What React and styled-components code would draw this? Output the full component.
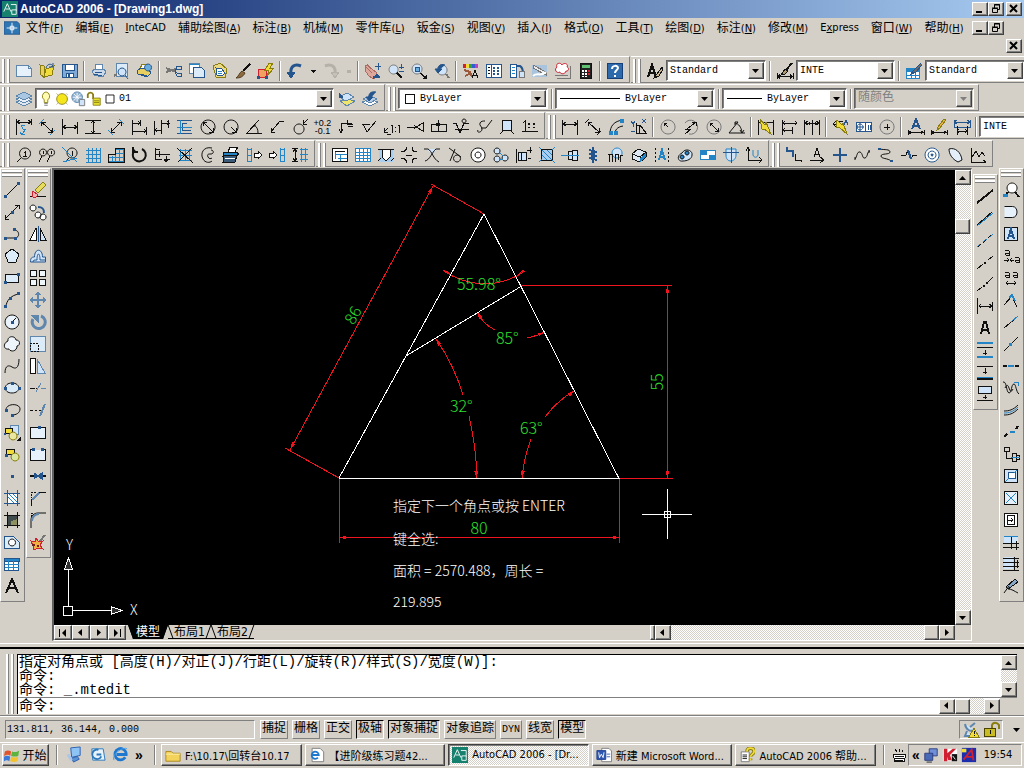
import React, { useState } from "react";
import styled, { createGlobalStyle, css } from "styled-components";

const k = "#111";
const b = "#2384c6";
const n = "#24558c";
const g = "#777";
const w = "#fff";
const l = "#cfe4f8";
const y = "#f2dc3a";
const r = "#d02030";
const s = "#5f86ad";
const o = "#8a7d10";
const none = "none";

// every icon is a list of [d, stroke, fill, strokeWidth] on an 18 x 18 grid
const ICONS = {
  // standard
  new: [["M1.5 3.5h12l3 3v8h-15z", s, "#e6f1fb"], ["M13.5 3.5v3h3", s]],
  open: [["M2 3l4 1v11l-3-2z", o, "#e9cf62"], ["M6 15L8 7l8-3-2 9z", o, y], ["M8 6c1-4 5-5 7-2M15 1v4h-4", n]],
  save: [["M1.5 2.5h15v13h-15z", n, "#7fa9d6"], ["M4.5 2.5h9v6h-9z", n, w], ["M5.5 11.5h7v4h-7z", n, w], ["M7 12h2v3H7z", none, n]],
  print: [["M5 7l1-5h6l1 5", s, w], ["M2 9l3-2h9l2 3-3 5-9-2z", s, "#c9d9ea"], ["M4 12l8 2M5 10l7 1", n]],
  preview: [["M3.5 1.5h11v13h-11z", s, "#dcebf8"], ["M9 6a4 4 0 1 0 .1 0zM12 13l3 4", n, l], ["M1 14l3-2", g, none, 2]],
  publish: [["M4 7l2-5h5l1 4", o, w], ["M1 9l4-3 8 2 2 3-4 4-9-3z", n, "#e9cf62"], ["M12 2a3.500 3.500 0 1 0 .1 0z", n, "#6aaede"], ["M4 12l7 2", n]],
  cut: [["M1 6l10 4M1 10l10-3", g, none, 2], ["M12 4h4v3h-4l-2 2 2 2h4v3h-4l-2-4z", n, none, 1]],
  copyClip: [["M1.500 1.500h10v10h-10z", s, w], ["M5.500 5.500h8l3 3v7h-11z", n, "#dcebf8"], ["M1 2h10", b]],
  paste: [["M2 4l7-3 7 6-2 9-9-1z", o, "#ead884"], ["M5 6l6 1 3 4-3 3-5-1z", n, w], ["M7 9l4 1M7 11l4 1", b]],
  match: [["M16 2L9 9", k, none, 2], ["M8 9l3 2c-2 4-5 5-9 5 3-2 3-5 6-7z", "#553c20", "#8d6a40"]],
  blockEdit: [["M1.500 7.500h8v8h-8z", r, "#f0a060"], ["M12 1l-4 7h4l-2 6 7-8h-4l3-5z", o, y], ["M0 15h3M8 15h3", n, none, 3]],
  undo: [["M15 4C8 1 4 5 5 12", n, none, 3], ["M1 10l4 6 4-6z", n, n]],
  redo: [["M3 4c7-3 11 1 10 8", "#b5b1a9", none, 3], ["M9 10l4 6 4-6z", "#b5b1a9", "#c5c1b9"]],
  caret: [["M6 8h6l-3 3z", none, k]],
  caretOff: [["M7 8h4v3h-4z", none, "#b5b1a9"]],
  pan: [["M1 3l3 1 5 4 3 2 1 5-4 2-5-4-3-5z", "#a96b62", "#dda79c"], ["M3 2l6 6M2 5l6 6", "#a96b62"], ["M9 16l4-3 3 3", n, n, 2], ["M14 1v7M11 4h6", n]],
  zoomReal: [["M6.500 3a4.500 4.500 0 1 0 .1 0z", g, l], ["M10 11l5 5", k, none, 2], ["M12 5h5M14.500 2v5M12 9h5", n]],
  zoomWin: [["M7 2a5 5 0 1 0 .1 0z", g, l], ["M5 5h4v4h-4z", n, "#6aaede"], ["M10.500 11l4 4", k, none, 2], ["M17 12v5h-5z", none, k]],
  zoomPrev: [["M9 3a5 5 0 1 0 .1 0z", g, l], ["M13 12l3 4", g, none, 2], ["M12 3C6 1 5 5 5 9M2 7l3 4 4-4z", n, n]],
  props: [["M1 2h3v4H1z", none, r], ["M4 2h3v4H4z", none, y], ["M7 2h3v4H7z", none, "#30a040"], ["M10 2h3v4h-3z", none, "#3060d0"], ["M13 2h3v4h-3z", none, "#c040c0"], ["M2 8l6 2 2 5M3 14l6-3", "#9b5a3a", none, 2], ["M10 16l3-8 3 8M11 13h4", k]],
  designCenter: [["M1.500 2.500h15v13h-15z", n, w, 1], ["M6 3v12", n], ["M8 5h2v2H8zM12 5h2v2h-2zM8 8h2v2H8zM12 8h2v2h-2zM8 11h2v2H8zM12 11h2v2h-2z", none, n], ["M3 5h2M3 8h2M3 11h2", k]],
  palettes: [["M2.500 2.500h6v13h-6z", n, w, 1], ["M8 4h4c2 1 3 4 3 8", n, none, 2], ["M11 9h5v6h-5z", g, l], ["M4 5h3M4 8h3M4 11h3", b]],
  sheetSet: [["M1 3h15v12H1z", none, "#a9c4dc"], ["M2 3l13 7v3L2 6z", g, "#eee"], ["M2 14c4-4 8 1 13-4", w, none, 2]],
  markup: [["M3 5c-2-4 4-5 5-2 2-3 7-1 5 2 3 1 1 5-1 4-1 4-6 3-6 1-4 2-6-3-3-5z", r, w], ["M1 13h13M16 4v12H3", g]],
  calc: [["M3.500 1.500h11v15h-11z", k, "#222"], ["M5 3h8v3H5z", none, "#5fc070"], ["M5 8h2v2H5zM8 8h2v2H8zM5 11h2v2H5zM8 11h2v2H8zM5 14h2v1H5zM8 14h2v1H8z", none, w], ["M11 8h2v2h-2zM11 11h2v2h-2z", none, r]],
  help: [["M1.500 1.500h15v15h-15z", "#173f78", "#2e69ac"], ["M6 7c0-4 6-4 6-1 0 2-3 2-3 5M9 13v2", w, none, 2]],
  textStyle: [["M2 15L6 3l4 12M4 11h5", k, none, 2], ["M16 5l-5 7-3 4 5-2 4-7z", k, "#c9b68e"]],
  dimStyle: [["M16 1l-6 7", k, none, 2], ["M9 7l3 2-3 3-4 1z", k, "#b29b70"], ["M1 11v6M17 11v6M2 14.500h14M4 12.500l-2 2 2 2M14 12.500l2 2-2 2", k]],
  tableStyle: [["M1.500 6.500h13v10h-13z", b, w], ["M1 7h13v3H1z", none, b], ["M6 7v9M10 7v9M2 13h12", b], ["M16 1L9 8l-3 4 5-2 6-7", n, "#6b6b6b"]],

  // layers
  layers: [["M1 12l8-3 8 3-8 4z", s, "#dfe8f0"], ["M1 9l8-3 8 3-8 4z", s, "#e8eff6"], ["M1 6l8-4 8 4-8 4z", s, "#a9c6e3"]],
  bulb: [["M9 1a5 5 0 0 0-2 9v3h4v-3a5 5 0 0 0-2-9z", o, "#fffbb0"], ["M7 14h4M7 16h4", g]],
  sun: [["M9 3a6 6 0 1 0 .1 0z", o, "#f5e61c"], ["M3 3l1 1M14 3l1 1M3 15l1-1M14 14l1 1", o]],
  vpFreeze: [["M8 1a6 6 0 1 0 .1 0z", s, "#8fb0d0"], ["M3 7h10M8 2v10M4 3l8 8M12 3l-8 8", w], ["M10.500 9.500h6v7h-6z", g, l]],
  lock: [["M2 8V4c1-3 5-3 6 0v5", o, none, 2], ["M8 8h8v8H8z", o, "#e9e430"], ["M9 11h6M9 13h6", o]],
  swatch: [["M4.500 4.500h9v9h-9z", k, w]],
  layerState: [["M2 11l7-2 8 2-8 5z", s, "#eee46e"], ["M1 7l8-4 7 4-8 4z", s, l], ["M1 3v5l4-1z", n, n]],
  layerPrev: [["M1 12l8-3 8 3-8 4z", s, w], ["M2 9l7-3 7 3-7 4z", s, "#b3cce6"], ["M15 2c-6-1-8 2-7 8M5 7l3 4 4-4z", n, n]],

  // dimensions
  powerDim: [["M1.500 1v16M16.500 1v6M2 4h14M5 2L2 4l3 2M13 2l3 2-3 2", k], ["M10 7H6l2 4h3l-4 5M5 14l2 3 3-1", b]],
  aligned: [["M1 6l5-5M12 17l5-5", b], ["M3.500 4l11 10M3.500 8V4h4M10 14h4.500v-4", k]],
  horiz: [["M1.500 1v16M16.500 4v12M2 9h14M5 7L2 9l3 2M13 7l3 2-3 2", k]],
  vert: [["M1 2.500h16M1 15.500h16M9 3v12M7 5l2-2 2 2M7 13l2 2 2-2", k]],
  diag: [["M1 12l5 5M12 1l5 5", b], ["M4 14L14 4M4 10v4h4M10 4h4v4", k]],
  baseDim: [["M2.500 2v15M10.500 2v6M16.500 9v8M3 5h7M3 13h13M8 3l2 2-2 2M14 11l2 2-2 2", k]],
  chainDim: [["M1.500 3v14M8.500 2v14M15.500 2v8M2 12h6M9 5h8M4 10l-2 2 2 2M14 3l2 2-2 2", k]],
  multiDim: [["M1 2.500h15M1 15.500h15M11 5.500H6v7h9", n], ["M4.500 2v14M1 9h15", b]],
  diameter: [["M9 2a7 7 0 1 0 .1 0z", k], ["M4 4l10 10M4 8V4h4M10 14h4v-4", k]],
  radius: [["M9 2a7 7 0 1 0 .1 0z", k], ["M9 9l5 5M10 14h4v-4", k]],
  angular: [["M14 2L2 15h15", k], ["M9 7c3 2 4 4 4 8M11 7H9v2", k]],
  leader: [["M16 3h-4L3 14M3 10v4h4", k]],
  ball: [["M8 6a5 5 0 1 0 .1 0z", k], ["M17 1l-5 5M12 2v4h4", k]],
  leader2: [["M4 14V5h11M2 11l2 4 2-4M10 2v4h6M11 8h5", k]],
  roughness: [["M2 6h8M3 6l4 8 9-11", k]],
  scale11: [["M1 14l4-4M1 10v4h4M4 16h4M9 7v8M16 7v8M8 8l1-1M15 8l1-1M12 9v1M12 13v1", k]],
  taper: [["M1 9h9M10 9l7-4v8zM8 7l2 2-2 2", k]],
  weld: [["M2 6.500h15v7H2zM9 2v11", k], ["M7 5h4v3H7z", none, k]],
  datum: [["M1 5h3l4 10 4-10h5M3 11h14", k], ["M12 1a2 2 0 1 0 .1 0", k]],
  section: [["M3 12c-2 3 4 3 4-1 0-3-3-3-2-6 1-2 3-2 5-2M6 10h5L17 2", k]],
  symbol: [["M4.500 2.500h9v10h-9z", k, l], ["M5 13l-3 3M13 13l3 3", k]],
  oneLine: [["M2 5l2-2v10M1 13h16", k], ["M7 5h2v2H7zM12 5h2v2h-2zM7 9h2v1H7zM12 9h2v1h-2z", none, k]],
  dLinear: [["M1.500 2v15M16.500 2v15M2 6h14M5 4L2 6l3 2M13 4l3 2-3 2", k]],
  dAligned: [["M1 5l4-4M13 17l4-4M4 4l11 10M4 8V4h4M11 14h4v-4", k]],
  arcLen: [["M3 16c0-8 4-13 13-14M8 16c0-4 2-7 8-8", k], ["M2 13h3v3H2zM13 1h3v3h-3zM7 13h3v3H7z", b, b]],
  ordinate: [["M6 5v10h11M6 7h4l6 8M9 8v7", k], ["M1 3l2 3 2-3M3 6v3M1 13h4M12 1l4 4M16 1l-4 4", n]],
  dRadius: [["M9 2a7 7 0 1 0 .1 0z", g], ["M9 9L5 5M5 8V5h3", k]],
  jogged: [["M3 5a7 7 0 1 1 4 11", g], ["M3 16l6-5H5l8-6M10 4h4v4", k]],
  dDiameter: [["M9 2a7 7 0 1 0 .1 0z", g], ["M5 5l8 8M5 8V5h3M10 13h3v-3", k]],
  dAngular: [["M1 15h16M1 15L10 4M7 5c4 1 6 4 7 9M10 4H7v3M12 12l2 3 2-3", k]],
  quick: [["M1.500 2v15M16.500 2v15M2 4h14", k], ["M3 1l5 6 1-3 5 12-7-5H5z", o, y]],
  baseline: [["M2.500 2v15M3 5h14M3 12h9M5 3L3 5l2 2M15 3l2 2-2 2M12 9v7M5 10l-2 2 2 2", k]],
  contin: [["M1.500 2v15M9 2v15M16.500 2v15M2 5h14M5 3L2 5l3 2M13 3l3 2-3 2M6 4v3M12 4v3", k]],
  qleader: [["M1 6h5M4 3L1 6l3 3M7 3h4", k], ["M5 2l5 5 1-2 4 11-7-6-4-1z", o, y], ["M12 7l2-5 2 5", n]],
  tolerance: [["M1.500 4.500h15v9h-15z", n, w], ["M10 5v9M13 7v5M15 7v5", n], ["M5 6a3 3 0 1 0 .1 0M5 5v8M2 9h7", n]],
  centerMark: [["M9 2a7 7 0 1 0 .1 0z", g], ["M9 6v6M6 9h6", k]],
  dimEdit: [["M5 11L9 1l4 10M6 8h6", n, none, 2], ["M1 12v5M17 12v5M2 14.500h14M4 13l-2 1.500 2 1.500M14 13l2 1.500-2 1.500", k]],
  dimTextEdit: [["M14 1L8 9l-1 3 3-2 6-8z", o, "#e8b040"], ["M1 12v5M17 12v5M2 14.500h14M4 13l-2 1.500 2 1.500M14 13l2 1.500-2 1.500", k]],
  dimUpdate: [["M1 4h16M4 2L1 4l3 2M14 2l3 2-3 2M1 2v8M17 2v8M1 9h16", n], ["M4 8v9M14 8v9M4 13h10M6 11l-2 2 2 2M12 11l2 2-2 2", k]],

  // mechanical
  balloon: [["M10 2a5.500 5.500 0 1 0 .1 0", k], ["M6 12l-4 4M10 5v6M9 6h1M8 10h4", k]],
  balloons: [["M5 3a3.500 3.500 0 1 0 .1 0M13 3a3.500 3.500 0 1 0 .1 0", k], ["M4 10l-3 6M12 10l-3 6M5 5v3M13 5v3", k]],
  balloonOff: [["M11 2a5 5 0 1 0 .1 0", k], ["M8 12l-4 4M11 5v5", k], ["M1 1l15 15M16 12L2 16", b]],
  grid: [["M4 2v14M8 2v14M12 2v14M16 2v14M2 4h15M2 8h15M2 12h15M2 16h15", b]],
  bom: [["M8 2v14M12 2v14M16 2v14M8 3h9M8 7h9M2 11h15M2 15h15M5 10v6", b], ["M1 16V8h7V2h9v14z", k]],
  spin: [["M12 3a6.500 6.500 0 1 1-7 1M3 1v5h5", k, none, 2]],
  insertRow: [["M2 2v12M2 3h5M2 8h15M6 5v6M2 13h7M11 13h6M13 10v5M11 13l2 3 2-3", k]],
  deleteGrid: [["M4 3v12M9 3v12M13 3v12M3 4h13M3 9h13M3 14h13", b], ["M1 2l16 15M16 2L2 16", k]],
  chain: [["M13 2c-9-2-12 6-9 11 2 4 7 4 9 2M12 4c3 0 3 4 0 4s-4 0-3 3c1 2 3 2 4 1", k]],
  printer: [["M6 6l2-5h8l-3 5", k, w], ["M2 6h12l3 2-3 2H1z", k, b], ["M2 9h13l-2 7H1z", k, "#395a78"], ["M3 12h10", w]],
  tableRight: [["M2 2v14M6 2v14M2 3h4M2 9h4M2 15h4", b], ["M9 7h4V5l4 4-4 4v-2H9z", k, w]],
  tableLeft: [["M12 2v14M16 2v14M12 3h5M12 9h5M12 15h5", b], ["M1 7h4V5l4 4-4 4v-2H1z", k, w]],
  tableHeight: [["M1 2.500h6M1 15.500h6M4 3v12M2 6l2-3 2 3M2 12l2 3 2-3", k], ["M10 2v14M14 2v14M9 3h8M9 8h8M9 13h8", b]],
  titleBlock: [["M1.500 2.500h15v13h-15z", k, w], ["M4 5v8M4 8h12M7 12h9M9 9v6", b], ["M4 5h10", k]],
  sheetGrid: [["M1.500 2.500h15v13h-15z", b, w], ["M5 3v12M9 3v12M13 3v12M2 6h14M2 9h14M2 12h14", b]],
  hole: [["M2 3h14v13H2z", none, "#a9cdef"], ["M5 3v8l4 4 4-4V3z", k, w], ["M1 3h16M1 15l3-3M14 15l3-3", k]],
  slot: [["M1 5.500h3l2-2V1M1 12.500h3l2 2V17M17 5.500h-3l-2-2V1M17 12.500h-3l-2 2V17M6 9h6", k]],
  cross: [["M4 3h10l-5 6z", none, l], ["M1 3h4c4 2 5 10 11 13M17 3h-4C9 6 7 14 2 15", k]],
  tangent: [["M11 9a3.500 3.500 0 1 0 .1 0M3 2l12 9M9 3L4 15", k]],
  rings: [["M9 2a7 7 0 1 0 .1 0z", k, w], ["M9 6a3 3 0 1 0 .1 0z", k, w]],
  balls: [["M5 2a3 3 0 1 0 .1 0M5 10a3 3 0 1 0 .1 0M13 9a3 3 0 1 0 .1 0", k, l], ["M7 7l5 3M8 13h3", b]],
  bolt: [["M3 6h8v8H3zM1 3v14M6 6v8", k, l], ["M15 1v6M12 4h5M13 12h3", k]],
  hatchSq: [["M3.500 3.500h11v11h-11z", k, "#a9cdef"], ["M4 4l10 10M4 9l5 5M9 4l5 5M1 1l2 2M1 16l3-3M14 4l3-3M14 14l3 3", b]],
  shaft: [["M1 9h6M7 5h4v8H7zM11 4h5v10h-5z", k, l], ["M0 9h18", b]],
  spring: [["M9 1v3M9 14v3M5 4l8 2-8 2 8 2-8 2 8 2", n, none, 2]],
  gear: [["M10 2a5 5 0 1 0 .1 0", b, l], ["M2 16V8h3v8M8 16V8h3v6M13 16V9h3M1 8h5", k]],
  part3d: [["M2 8l6-5 8 3v5l-6 5-8-3z", k, "#dce9f4"], ["M2 8l8 3 6-5M10 11v5", k], ["M10 12l6-5v4l-6 5z", none, b]],
  letterA: [["M2.500 2v2M2.500 6v2M2.500 10v2M2.500 14v2M15.500 2v2M15.500 6v2M15.500 10v2M15.500 14v2", k], ["M6 14L9 4l3 10M7 11h4", b, none, 2]],
  cam: [["M6 7c4-6 11-2 10 2 0 4-5 6-9 6-5 1-7-5-1-8z", k, l], ["M6 9a2 2 0 1 0 .1 0M11 5a2 2 0 1 0 .1 0", k, b]],
  flag: [["M1.500 4.500h15v9h-15z", b, w], ["M2 5h6v4H2zM10 9h6v4h-6z", none, b]],
  shield: [["M4 3h10v6c0 4-3 6-5 6-3 0-5-2-5-6z", b, l], ["M1 6h16M9 1v16", n]],
  ucsU: [["M3 2v12h14M1 5l2-4 2 4M14 11l3 3-3 3", k], ["M8 4v5c1 3 4 3 5 0V4", b]],
  step: [["M2 1v4h6v6", n, none, 2], ["M10 8v6h6v2", k]],
  aLeader: [["M6 11L9 2l3 9M7 8h4M2 14h13M12 11l4 3-4 3", k]],
  plus: [["M9 2v14M2 9h14", n, none, 2]],
  wave: [["M1 13c2-2 2-8 5-7s2 7 5 6 2-7 5-7M1 11v3M15 4v3", k]],
  sCurve: [["M2 3c6 1 11 0 11 3s-9 1-9 4 7 2 10 5", k], ["M1 2h3v2H1zM13 14h3v2h-3z", none, n]],
  breakLine: [["M1 9h5l2-5 3 9 2-4h4", k], ["M8 4l3 9", n, none, 2]],
  target: [["M9 2a7 7 0 1 0 .1 0M9 5a4 4 0 1 0 .1 0", n, w], ["M9 8a1 1 0 1 0 .1 0", n, n]],
  blade: [["M3 3c6-2 12 3 13 11l-4 2C6 13 3 8 3 3z", k, "#e4eef8"]],
  graph: [["M2 2v14h15M14 14l3 2M3 11l4-6 3 6 3-5 3 4", k]],

  // draw
  line: [["M3 15L15 3", k], ["M1 14h3v3H1zM14 1h3v3h-3z", none, n]],
  xline: [["M2 16L16 2M2 12v4h4M12 2h4v4", k], ["M8 8h3v3H8z", none, n]],
  pline: [["M1 13h11c5 0 5-8-1-8", k], ["M1 12h3v3H1zM11 12h3v3h-3zM10 3h3v3h-3z", none, n]],
  polygon: [["M9 2l7 5-3 8H5L2 7z", k, "#dcebf8"]],
  rect: [["M2.500 5.500h13v8h-13z", k, "#dcebf8"], ["M1 12h3v3H1zM14 4h3v3h-3z", none, n]],
  arc: [["M3 16C3 10 8 4 16 3", k], ["M1 14h3v3H1zM14 1h3v3h-3zM6 6h3v3H6z", none, n]],
  circle: [["M9 2a7 7 0 1 0 .1 0z", k, "#eaf3fb"], ["M9 9l4-4", k], ["M8 8h3v3H8z", none, n]],
  revcloud: [["M5 6c-1-5 7-6 8-1 5 0 4 6 1 6 0 6-7 6-8 3-6 1-6-6-1-8z", k, "#eef5fb"]],
  spline: [["M2 16c0-8 4-8 7-6s7 2 7-8", k]],
  ellipse: [["M9 4c9 0 9 10 0 10S0 4 9 4z", k, "#dcebf8"], ["M1 8h3v3H1zM15 8h3v3h-3zM8 3h3v3H8z", none, n]],
  ellArc: [["M3 9c0-7 14-7 14-1 0 4-4 6-8 6", k], ["M2 8h3v3H2zM8 13h3v3H8z", none, n]],
  insert: [["M7 2h8v9H7z", s, l], ["M2.500 5.500h7v5h-7z", k, y], ["M10 9a4 4 0 1 0 .1 0z", o, "#e8e6a0"], ["M18 13v5h-5z", none, k], ["M1 10h2v2H1z", none, n]],
  block: [["M3.500 4.500h8v5h-8z", k, y], ["M12 8a4 4 0 1 0 .1 0z", o, "#d9e7a0"], ["M2 9h3v3H2z", none, n]],
  point: [["M8 8h3v3H8z", none, n]],
  hatch: [["M4 4h10v10H4z", n, w], ["M5 4l9 9M5 8l6 6M9 4l5 5", b], ["M4 1v16M14 1v16M1 4h16M1 14h16", n]],
  gradient: [["M4 4h10v10H4z", k, "#3f4b4a"], ["M8 10l6-2v6H8z", none, "#8f9060"], ["M4 1v16M14 1v16M1 4h16M1 14h16", k]],
  region: [["M1.500 3.500h9l6 6v6h-15z", n, "#dcebf8"], ["M9 6a3.500 3.500 0 1 0 .1 0z", k, w]],
  table: [["M1.500 3.500h14v12h-14z", n, w], ["M1 3h15v3H1z", n, b], ["M5 6v9M10 6v9M2 9h14M2 12h14", b]],
  mtext: [["M3 16L9 2l6 14M5 11h8", k, none, 2]],

  // modify
  erase: [["M1 15h16", k], ["M6 9l8-8 3 3-8 8z", o, "#e8dc60"], ["M4 10l5 4-2 2H4l-1-3z", r, "#eeb3ac"]],
  copy: [["M4 2a3 3 0 1 0 .1 0M9 9a3 3 0 1 0 .1 0M14 11a3 3 0 1 0 .1 0", k, w], ["M9 4c5 0 6 2 6 6", n, none, 2]],
  mirror: [["M7 3v12H1z", k, w], ["M11 3v12h6z", k, l], ["M9 1v16", n]],
  offset: [["M1.500 15c0-4 1-5 4-5 0-9 8-9 8 0h3v5z", n, l], ["M4 15c0-2 1-2 4-2 0-8 3-8 3 0h6", n]],
  array: [["M1.500 1.500h6v6h-6zM10.500 1.500h6v6h-6zM1.500 10.500h6v6h-6zM10.500 10.500h6v6h-6z", k, "#eef5fb"]],
  move: [["M9 3v12M3 9h12", s, none, 2], ["M6 4l3-4 3 4zM6 14l3 4 3-4zM4 6L0 9l4 3zM14 6l4 3-4 3z", none, s]],
  rotate: [["M12 3a6.500 6.500 0 1 1-8 3", s, none, 3], ["M2 2h7v7z", s, s]],
  scale: [["M1.500 1.500h15v15h-15z", s, "#dcebf8"], ["M1 8.500h2M4 8.500h2M7 8.500h2M9.500 10v2M9.500 13v2M1.500 10v2M1.500 13v2M2 16.500h2M5 16.500h2M8 16.500h2", k]],
  stretch: [["M1.500 1.500h5v15h-5z", k, w], ["M8 2l8 14H8z", s, l]],
  trim: [["M1 9h5M7 9h1M12 9h5", k], ["M7 13l5-9M12 9h5", s]],
  extend: [["M1 9h3M6 9h2M10 9h2", k], ["M11 15l5-12", s, none, 2]],
  breakPt: [["M1.500 4.500h15v11h-15z", k, "#e6f1fb"], ["M9 3h3v3H9z", none, n]],
  breakSeg: [["M1.500 4.500h15v11h-15z", none, "#e6f1fb"], ["M3 4.500H1.500v11h15v-11H15", k], ["M3 3h3v3H3zM12 3h3v3h-3z", none, n]],
  join: [["M1 9h16", k, none, 2], ["M5 6l4 3-4 3zM13 6L9 9l4 3z", n, n]],
  chamfer: [["M2 17v-6l8-8h7", k], ["M2 3h2M5 3h2M2 5v2M2 8v1", k], ["M3 11l7-7", s, none, 2]],
  fillet: [["M2 17V9c0-4 3-7 7-7h8", k], ["M2 2h2M2 4v2", k], ["M3 10c0-4 3-7 7-7", s, none, 2]],
  explode: [["M2 8l4 1 1-4 3 4 4-1-3 4 3 4-5-1-4 2-1-4z", r, "#f0b040"], ["M11 8l5-6", g, none, 2], ["M3 12h3M8 13h2", "#70201a", none, 2]],

  // right hand bars
  thick: [["M1 16L17 3", k, none, 2]],
  thin: [["M1 17L17 4", b], ["M1 16L16 3", k]],
  dashed: [["M1 16l4-3M7 11l4-3M12 7l5-4", b], ["M2 16l3-3M7 12l3-3M12 7l3-3", k]],
  dashDot: [["M1 16l6-5M12 7l5-4", k], ["M8 9h2v2H8z", none, k]],
  dashDots: [["M1 16l5-4M12 7l5-5", k], ["M7 10h2v2H7zM10 7h2v2h-2z", none, k]],
  hDim: [["M1.500 1v16M16.500 5v9M3 9h13M5 7L3 9l2 2M13 7l3 2-3 2", k]],
  bigA: [["M5 15L8 3h2l3 12M6 11h6", k, none, 2]],
  rowsTop: [["M1 2h16M1 16h16", b, none, 2], ["M1 6.500h16M9 9v5M7 12h4", k]],
  rowsMid: [["M1 3h16M9 5v6M7 9h4", k], ["M1 15h16", k, none, 3], ["M1 14h16", b]],
  rowsBox: [["M2.500 1.500h13v7h-13z", k, l], ["M1 15h16M9 10v4M7 12h4", k]],
  find: [["M10 2a5 5 0 1 0 .1 0", k, w], ["M13 11l4 5M6 11l-3 4", k, none, 2], ["M1 13h5v3H1z", none, b]],
  dShape: [["M2.500 3.500h8c6 0 6 11 0 11h-8", k, "#e6f1fb"]],
  boxA: [["M2.500 2.500h13v13h-13z", k, l], ["M6 14L9 4l3 10M7 11h4", n, none, 2]],
  aaIn: [["M3 3h3l1 1v4H4L3 7l1-1h3M2 13h5M5 11l2 2-2 2M12 13H8M10 11l-2 2 2 2M13 10h3l1 1v4h-3l-1-1 1-1h3", k]],
  aaOut: [["M3 3h3l1 1v4H4L3 7l1-1h3M11 3h3l1 1v4h-3l-1-1 1-1h3M4 14h10M6 12l-2 2 2 2M12 12l2 2-2 2", k]],
  corner: [["M2 14l8-9 5 11", k], ["M7 7l3-3 3 6", b, none, 2]],
  segment: [["M2 15L13 6", k], ["M9 9l7-6", b]],
  segmentMid: [["M2 16L16 2", k], ["M7 8h3v3H7z", none, b]],
  dashSeg: [["M1 9h4M13 9h4", k, none, 2], ["M6 9h6", b, none, 2]],
  zigzag: [["M1 3c4-1 3 10 6 11 3 0 2-9 5-9 2 0 2 8 5 10M3 9c2-4 3-3 4 0s2 5 4 1", k], ["M12 3h4v4", b]],
  ripple: [["M2 10c5 0 9-1 14-6M2 14c5 0 9-1 14-6", k], ["M2 12c5 0 9-1 14-6", b]],
  stairs: [["M2 14l3-3M14 6l2-3", k, none, 2], ["M8 9h5", b, none, 2]],
  assembly: [["M2 2h5v4H2zM4 7v6h6M10 8h4v8h-4zM14 10h3v4h-3z", k], ["M9 12h9", b]],
  frameX: [["M2.500 2.500h13v13h-13z", k, l], ["M6 5h7v6H6z", n, w], ["M3 15l4-4M15 3l-3 3", b]],
  boxX: [["M2.500 2.500h13v13h-13z", k, "#e6f1fb"], ["M4 4l10 10M14 4L4 14", b]],
  boxArrow: [["M2.500 2.500h13v13h-13z", k, w], ["M5.500 4.500h7v9h-7zM6 9h4M9 7l2 2-2 2", k]],
  tblA: [["M2 3h7v7H2zM10 3h6v7h-6z", none, l], ["M1 10h16M1 14h16M9 3v13M14 8v9", k], ["M2 3h14", b]],
  tblB: [["M2 2h9v12H2z", none, l], ["M1 3h16M1 7h16M1 11h16M1 15h16M12 2v14M15 5v8", k]],
  pen: [["M4 10l9-8 3 3-10 7z", k, "#89a7c7"], ["M7 9L2 16M6 12c4 0 6 2 10 4", k]],

  // shell
  app: [["M0 0h18v18H0z", none, "#16806f"], ["M2 12L6 3l4 9M4 9h4M10 4h6v7", w], ["M11 10h5v5h-5z", w, "#16806f"]],
  drawing: [["M0 2h15l3 3v11H0z", n, "#2d76b3"], ["M9 3v12M3 9h12M7 7h4v4H7z", w]],
  win: [["M1 5c3-2 5-1 7 0l-1 5c-2-2-4-1-7 0z", none, "#e0532c"], ["M9 5c3 1 5 1 8-1l-1 6c-3 1-5 1-8 0z", none, "#5cb33e"], ["M0 11c3-2 5-1 7 0l-1 5c-3-2-4-1-6 0z", none, "#3b78d8"], ["M8 11c3 1 5 1 8 0l-1 5c-3 1-5 1-8 0z", none, "#f2c32c"]],
  desktop: [["M5 2l10-1v9L6 12z", "#2c5fae", "#8ec3f5"], ["M6 13l6-2 2 3-6 3z", "#2c5fae", "#5b93d8"], ["M2 9l4 6", "#a9c6ea", none, 3]],
  outlook: [["M3 3h12l2 12H4z", "#2c77b8", "#e6f3fd"], ["M10 4a5 5 0 1 0 3 7M8 9h5", "#2c77b8", none, 2]],
  ie: [["M14 12a6 6 0 1 1 1-3H5", "#1f78d0", none, 3], ["M2 15C-1 9 12 0 16 3", "#4aa0e8"]],
  iePage: [["M3.500 1.500h9l4 4v11h-13z", g, w], ["M10 12a4 4 0 1 1 1-3H4", "#1f78d0", none, 2]],
  folder: [["M1 5h6l2 2h8v9H1z", "#a88418", "#f3d35b"], ["M1 8h16", "#fff2b0"]],
  word: [["M6.500 1.500h8l3 3v12h-11z", g, w], ["M1 4h10v10H1z", "#1f3f93", "#2f57b0"], ["M3 6l1 6 2-4 2 4 1-6", w], ["M12 8h4M12 11h4", "#2f57b0"]],
  chm: [["M2.500 5.500h9v11h-9z", g, w], ["M4 9h5M4 11h5M4 13h5", k], ["M9 5c0-5 8-5 8 0 0 3-4 3-4 6M13 13v2", o, none, 4], ["M9 5c0-5 8-5 8 0 0 3-4 3-4 6M13 13v2", y, none, 2]],
  keyboard: [["M3.500 8.500h12l-1 7h-10z", k, w], ["M5 10h9M5 12h9M5 14h8", k], ["M5 3l2 3M9 3l1 3M12 4l1 2", k]],
  network: [["M7 2h9v8H7z", "#2b3c78", "#6f8fd8"], ["M2 7h9v8H2z", "#2b3c78", "#4868b8"], ["M4 17h6", g, none, 2]],
  kasper: [["M1 2h16v14H1z", none, w], ["M2 2h4v5l6-5h4L9 9l2 6H7L6 11v5H2z", none, r], ["M11 8h6v8h-6z", none, k], ["M12 10l3 4", w]],
  acadTray: [["M1 1h16v16H1z", none, "#1b2fae"], ["M3 14L12 3l2 12M6 11h8", r, none, 2], ["M1 2h5v4H1z", none, y]],
  comm: [["M3 3c1 6 5 8 10 6M8 6l5-4M5 10l-2 5h7", s, l, 2], ["M12 7l5 9H7z", o, y], ["M12 10v3M12 14v1", k]],
  unlock: [["M9 8V4c1-3 5-3 7 0v4", o, none, 2], ["M1 7h11v8H1z", "#4a4300", "#c9bb22"], ["M7 9v4", k]],
};

const Glyph = styled.svg.attrs({ viewBox: "0 0 18 18", "aria-hidden": true })`
  width: ${(p) => p.$size || 18}px;
  height: ${(p) => p.$size || 18}px;
  flex: none;
  display: block;
`;

// straight strokes snap to the pixel grid, curves stay smooth
const rendering = (d) => (/[acCs]/.test(d) ? "auto" : "crispEdges");

function Icon({ name, size }) {
  return (
    <Glyph $size={size}>
      {ICONS[name].map(([d, stroke = k, fill = none, width = 1], i) => (
        <path
          key={i}
          d={d}
          stroke={stroke}
          fill={fill}
          strokeWidth={width}
          shapeRendering={size ? "auto" : rendering(d)}
        />
      ))}
    </Glyph>
  );
}

const MENUS = [
  ["文件", "F"], ["编辑", "E"], ["InteCAD"], ["辅助绘图", "A"], ["标注", "B"], ["机械", "M"],
  ["零件库", "L"], ["钣金", "S"], ["视图", "V"], ["插入", "I"], ["格式", "O"], ["工具", "T"],
  ["绘图", "D"], ["标注", "N"], ["修改", "M"], ["Express"], ["窗口", "W"], ["帮助", "H"],
];

const STANDARD = "new open save | print preview publish | cut copyClip paste match blockEdit | undo caret redo caretOff | pan zoomReal zoomWin zoomPrev | props designCenter palettes sheetSet markup calc | help";
const POWER_DIM_A = "powerDim aligned horiz vert diag baseDim chainDim multiDim diameter radius angular leader ball";
const POWER_DIM_B = "leader2 roughness scale11 taper weld datum section symbol oneLine";
const DIMENSION = "dLinear dAligned arcLen ordinate | dRadius jogged dDiameter dAngular | quick baseline contin | qleader tolerance centerMark | dimEdit dimTextEdit dimUpdate |";
const BALLOONS = "balloon balloons balloonOff grid bom spin insertRow deleteGrid chain printer tableRight tableLeft tableHeight";
const MECHANICAL = "titleBlock sheetGrid hole slot cross tangent rings balls bolt hatchSq shaft spring gear part3d letterA cam flag shield ucsU";
const SKETCH = "step aLeader plus wave sCurve breakLine target blade graph";
const DRAW = "line xline pline polygon rect arc circle revcloud spline ellipse ellArc insert block point hatch gradient region table mtext";
const MODIFY = "erase copy mirror offset array move rotate scale stretch trim extend breakPt breakSeg join chamfer fillet explode";
const LINES = "thick thin dashed dashDot dashDots hDim bigA rowsTop rowsMid rowsBox";
const EDITING = "find dShape boxA aaIn aaOut corner segment segmentMid dashSeg zigzag ripple stairs assembly frameX boxX boxArrow tblA tblB pen";

const TASKS = [
  ["folder", "F:\\10.17\\回转台10.17"],
  ["iePage", "【进阶级练习题42..."],
  ["app", "AutoCAD 2006 - [Dr..."],
  ["word", "新建 Microsoft Word..."],
  ["chm", "AutoCAD 2006 帮助..."],
];

function Tools({ items }) {
  return items.split(" ").map((name, i) => {
    if (name === "|") return <Separator key={i} />;
    return (
      <ToolButton key={i} type="button" aria-label={name} $narrow={name.startsWith("caret")}>
        <Icon name={name} />
      </ToolButton>
    );
  });
}

function Combo({ label, value, icon, lineWidth, width, disabled, cjk }) {
  return (
    <ComboBox $width={width} $disabled={disabled}>
      {icon}
      {lineWidth && <LineSample $width={lineWidth} />}
      <ComboSelect aria-label={label} disabled={disabled} $cjk={cjk}>
        <option>{value}</option>
      </ComboSelect>
      <ComboArrow $disabled={disabled}>
        <Arrow dir="down" />
      </ComboArrow>
    </ComboBox>
  );
}

const ARROWS = {
  up: "M0 6h7L3.500 2z",
  down: "M0 2h7L3.500 6z",
  left: "M5 0v7L1 3.500z",
  right: "M2 0v7l4-3.500z",
  first: "M0 0h1v8H0zM7 0v8L3 4z",
  last: "M7 0h1v8H7zM1 0v8l4-4z",
};

function Arrow({ dir }) {
  return (
    <svg width="8" height="8" viewBox="0 0 8 8" aria-hidden="true">
      <path d={ARROWS[dir]} fill="currentColor" />
    </svg>
  );
}

function WindowIcon({ type }) {
  return (
    <svg width="10" height="10" viewBox="0 0 10 10" fill="none" stroke="#000" aria-hidden="true">
      {type === "min" && <path d="M1 8h6" strokeWidth="2" />}
      {type === "restore" && <path d="M3.500 4V.5h5v5H7M3 1h6M1.500 4.500h5v4h-5zM1 4h6" />}
      {type === "close" && <path d="M1 1l7 7M8 1L1 8" strokeWidth="2" />}
    </svg>
  );
}

function Drawing() {
  return (
    <DrawingSvg role="img" aria-label="Drawing1.dwg">
      <g stroke="#f0141e" fill="none">
        <path d="M377 14l53 30M379 16L236 280M231 278l54 30" />
        <path d="M466 115.500h152M565 308.500h54M613.500 116v192" />
        <path d="M285.500 308v65M565.500 308v65M285 367.500h280" />
        <path d="M389 100A70 70 0 0 0 471 101" />
        <path d="M423 142q6 12 18 18M473 168q10-2 18-6" />
        <path d="M382 169q18 26 27 56M415 246q7 30 8 62" />
        <path d="M520 221q-16 9-29 26M477 269q-7 18-9 39" />
      </g>
      <g fill="#f0141e">
        <path d="M379 16l-2 8-3-2zM236 280l5-6-3-2z" />
        <path d="M613.500 116l2 7h-4zM613.500 308l2-7h-4z" />
        <path d="M286 367.500l6-2v4zM565 367.500l-6-2v4z" />
        <path d="M397 105l-4-5-2 3zM463 105l7-4-1-2zM423 142l2 7 4-2zM491 162l-7 1 1 3z" />
        <path d="M382 169l2 7 3-2zM423 308l-3-7h4zM468 308l-1-7h4zM520 221l-7 3 3 3z" />
      </g>
      <path d="M285 308.500h280L430 44 285 308M352 186l114-69" stroke="#fff" fill="none" />
      <CadText fill="#2ee02e" $size={16}>
        <text x="403" y="120">55.98°</text>
        <text x="442" y="174">85°</text>
        <text x="396" y="242">32°</text>
        <text x="466" y="264">63°</text>
        <text x="425" y="364" textAnchor="middle">80</text>
        <text transform="translate(304 148) rotate(-61)" textAnchor="middle">86</text>
        <text transform="translate(609 212) rotate(-90)" textAnchor="middle">55</text>
      </CadText>
      <CadText fill="#fff" $size={14}>
        <text x="339" y="341">指定下一个角点或按 ENTER</text>
        <text x="339" y="374">键全选:</text>
        <text x="339" y="406">面积 = 2570.488，周长 =</text>
        <text x="339" y="437">219.895</text>
        <text x="12" y="380">Y</text>
        <text x="76" y="445">X</text>
      </CadText>
      <g stroke="#fff" fill="none">
        <path d="M9.500 436.500h9v9h-9zM14.500 436v-48M18 440.500h49" />
        <path d="M14.500 388l4 11h-8zM68 440.500l-11-4v8z" fill="#333" />
        <path d="M613.500 319v50M588 344.500h50M610.500 341.500h6v6h-6z" />
      </g>
    </DrawingSvg>
  );
}

export default function App() {
  const [command, setCommand] = useState("");

  return (
    <>
      <GlobalStyle />
      <Page>
        <TitleBar>
          <Icon name="app" size={16} />
          <Title>AutoCAD 2006 - [Drawing1.dwg]</Title>
          <WindowButtons />
        </TitleBar>

        <MenuBar>
          <Icon name="drawing" size={16} />
          <Menus>
            {MENUS.map(([text, key]) => (
              <MenuItem key={text + key} type="button">
                {key ? <Han>{text}</Han> : text.startsWith("I") ? <><u>I</u>nteCAD</> : <>E<u>x</u>press</>}
                {key && <>(<u>{key}</u>)</>}
              </MenuItem>
            ))}
          </Menus>
          <WindowButtons child />
        </MenuBar>
        <MenuOverflow>
          <CaptionButton type="button" aria-label="关闭文档">
            <WindowIcon type="close" />
          </CaptionButton>
        </MenuOverflow>

        <ToolRow>
          <Toolbar>
            <Grip />
            <Tools items={STANDARD} />
          </Toolbar>
          <Toolbar $open>
            <Grip />
            <Tools items="textStyle" />
            <Combo label="文字样式" value="Standard" width={100} />
            <Separator />
            <Tools items="dimStyle" />
            <Combo label="标注样式" value="INTE" width={99} />
            <Separator />
            <Tools items="tableStyle" />
            <Combo label="表格样式" value="Standard" width={100} />
          </Toolbar>
        </ToolRow>
        <ToolRow>
          <Toolbar>
            <Grip />
            <Tools items="layers" />
            <Combo
              label="图层"
              value="01"
              width={299}
              icon={["bulb", "sun", "vpFreeze", "lock", "swatch"].map((name) => (
                <Icon key={name} name={name} size={16} />
              ))}
            />
            <Tools items="layerState layerPrev" />
          </Toolbar>
          <Toolbar>
            <Grip />
            <Combo label="颜色" value="ByLayer" width={150} icon={<Icon name="swatch" />} />
            <Separator />
            <Combo label="线型" value="ByLayer" width={160} lineWidth={60} />
            <Separator />
            <Combo label="线宽" value="ByLayer" width={125} lineWidth={35} />
            <Separator />
            <Combo label="打印样式" value="随颜色" width={120} disabled cjk />
          </Toolbar>
        </ToolRow>
        <ToolRow>
          <Toolbar>
            <Grip />
            <Tools items={POWER_DIM_A} />
            <ToolButton type="button" aria-label="tolerances">
              <Tolerance>
                <span>+0.2</span>
                <span>-0.1</span>
              </Tolerance>
            </ToolButton>
            <Tools items={POWER_DIM_B} />
          </Toolbar>
          <Toolbar $open>
            <Grip />
            <Tools items={DIMENSION} />
            <Combo label="当前标注样式" value="INTE" width={64} />
          </Toolbar>
        </ToolRow>
        <ToolRow>
          <Toolbar>
            <Grip />
            <Tools items={BALLOONS} />
          </Toolbar>
          <Toolbar>
            <Grip />
            <Tools items={MECHANICAL} />
          </Toolbar>
          <Toolbar>
            <Grip />
            <Tools items={SKETCH} />
          </Toolbar>
        </ToolRow>

        <Workspace>
          <SideBar>
            <Grip $flat />
            <Tools items={DRAW} />
          </SideBar>
          <SideBar>
            <Grip $flat />
            <Tools items={MODIFY} />
          </SideBar>
          <Viewport>
            <CanvasRow>
              <Canvas>
                <Drawing />
              </Canvas>
              <VScroll>
                <ScrollButton type="button" aria-label="向上滚动"><Arrow dir="up" /></ScrollButton>
                <Track $grow={34} />
                <Thumb />
                <Track $grow={374} />
                <ScrollButton type="button" aria-label="向下滚动"><Arrow dir="down" /></ScrollButton>
              </VScroll>
            </CanvasRow>
            <TabRow>
              {["first", "left", "right", "last"].map((dir) => (
                <NavButton key={dir} type="button" aria-label={dir}><Arrow dir={dir} /></NavButton>
              ))}
              <Tabs>
                <Tab type="button" $active>模型</Tab>
                <Tab type="button">布局1</Tab>
                <Tab type="button">布局2</Tab>
              </Tabs>
              <HScroll>
                <Splitter />
                <ScrollButton type="button" aria-label="向左滚动"><Arrow dir="left" /></ScrollButton>
                <Track $grow={1} />
                <Thumb />
                <ScrollButton type="button" aria-label="向右滚动"><Arrow dir="right" /></ScrollButton>
              </HScroll>
            </TabRow>
          </Viewport>
          <SideBar $low>
            <Grip $flat />
            <Tools items={LINES} />
          </SideBar>
          <SideBar>
            <Grip $flat />
            <Tools items={EDITING} />
          </SideBar>
        </Workspace>

        <CommandPanel>
          <Grip />
          <CommandBox>
            <HistoryRow>
              <History>
                <p>指定对角点或 [高度(H)/对正(J)/行距(L)/旋转(R)/样式(S)/宽度(W)]:</p>
                <p>命令:</p>
                <p>命令: _.mtedit</p>
              </History>
              <VScroll>
                <ScrollButton type="button" aria-label="向上滚动"><Arrow dir="up" /></ScrollButton>
                <Track $grow={1} />
                <ScrollButton type="button" aria-label="向下滚动"><Arrow dir="down" /></ScrollButton>
              </VScroll>
            </HistoryRow>
            <PromptRow>
              <label htmlFor="command">命令:</label>
              <Prompt id="command" value={command} onChange={(e) => setCommand(e.target.value)} />
              <ScrollButton type="button" aria-label="向左滚动"><Arrow dir="left" /></ScrollButton>
              <Thumb />
              <Track $size={14} />
              <ScrollButton type="button" aria-label="向右滚动"><Arrow dir="right" /></ScrollButton>
              <Corner />
            </PromptRow>
          </CommandBox>
        </CommandPanel>

        <StatusBar>
          <Coordinates>131.811, 36.144, 0.000</Coordinates>
          <Toggle type="button">捕捉</Toggle>
          <Toggle type="button">栅格</Toggle>
          <Toggle type="button">正交</Toggle>
          <Toggle type="button" $on>极轴</Toggle>
          <Toggle type="button" $on>对象捕捉</Toggle>
          <Toggle type="button">对象追踪</Toggle>
          <Toggle type="button" $small>DYN</Toggle>
          <Toggle type="button">线宽</Toggle>
          <Toggle type="button" $on>模型</Toggle>
          <StatusTray>
            <Icon name="comm" />
            <Icon name="unlock" />
          </StatusTray>
          <Arrow dir="down" />
        </StatusBar>

        <TaskBar>
          <StartButton type="button">
            <Icon name="win" size={16} />
            开始
          </StartButton>
          <TaskDivider />
          <QuickLaunch>
            <Icon name="desktop" size={17} />
            <Icon name="outlook" size={17} />
            <Icon name="ie" size={17} />
            <More>»</More>
          </QuickLaunch>
          <TaskDivider />
          <TaskList>
            {TASKS.map(([icon, text]) => (
              <Task key={text} type="button" $active={icon === "app"}>
                <Icon name={icon} size={16} />
                <span>{text}</span>
              </Task>
            ))}
          </TaskList>
          <TaskDivider />
          <Icon name="keyboard" />
          <Tray>
            <More>«</More>
            <Icon name="network" size={16} />
            <Icon name="kasper" size={16} />
            <Icon name="acadTray" size={16} />
            <time>19:54</time>
          </Tray>
        </TaskBar>
      </Page>
    </>
  );
}

function WindowButtons({ child }) {
  return (
    <CaptionGroup $child={child}>
      <CaptionButton type="button" aria-label="最小化"><WindowIcon type="min" /></CaptionButton>
      <CaptionButton type="button" aria-label="还原"><WindowIcon type="restore" /></CaptionButton>
      {!child && (
        <CaptionButton type="button" aria-label="关闭" $gap><WindowIcon type="close" /></CaptionButton>
      )}
    </CaptionGroup>
  );
}

const raised = css`
  border: 1px solid;
  border-color: #fff #404040 #404040 #fff;
  box-shadow: inset -1px -1px 0 #808080;
`;

const sunken = css`
  border: 1px solid;
  border-color: #808080 #fff #fff #808080;
`;

const dither = css`
  background: repeating-conic-gradient(#fff 0 25%, #d4d0c8 0 50%) 0 0 / 2px 2px;
`;

const mono = css`
  font-family: "Liberation Mono", "Noto Sans CJK SC", monospace;
`;

const GlobalStyle = createGlobalStyle`
  * {
    box-sizing: border-box;
  }
  body {
    margin: 0;
    background: #d4d0c8;
    color: #000;
    font: 11px "DejaVu Sans Condensed", "Noto Sans CJK SC", sans-serif;
  }
  button {
    margin: 0;
    padding: 0;
    border: none;
    background: #d4d0c8;
    color: inherit;
    font: inherit;
  }
`;

const Page = styled.div`
  display: flex;
  flex-direction: column;
  min-height: 100vh;
  overflow: hidden;
`;

const TitleBar = styled.header`
  display: flex;
  align-items: center;
  gap: 2px;
  height: 18px;
  padding: 0 2px;
  background: linear-gradient(to right, #0a246a, #a6caf0);
`;

const Title = styled.h1`
  flex: 1;
  margin: 0;
  color: #fff;
  font: bold 12px/18px "Liberation Sans", sans-serif;
`;

const CaptionGroup = styled.div`
  display: flex;
  margin-right: ${(p) => (p.$child ? 18 : 0)}px;
`;

const CaptionButton = styled.button`
  ${raised}
  display: flex;
  align-items: center;
  justify-content: center;
  width: 16px;
  height: 14px;
  margin-left: ${(p) => (p.$gap ? 2 : 0)}px;
`;

const MenuBar = styled.nav`
  display: flex;
  align-items: center;
  height: 20px;
  padding: 0 2px 0 4px;
`;

const Menus = styled.div`
  display: flex;
  flex: 1;
`;

const MenuItem = styled.button`
  padding: 0 6px;
  line-height: 18px;
  white-space: nowrap;
`;

const Han = styled.span`
  font-size: 12px;
`;

const MenuOverflow = styled.div`
  display: flex;
  justify-content: flex-end;
  height: 18px;
  padding: 1px 2px;
`;

const ToolRow = styled.div`
  display: flex;
  gap: 1px;
  height: 28px;
  padding-bottom: 1px;
  overflow: hidden;
`;

const Toolbar = styled.div`
  display: flex;
  flex: ${(p) => (p.$open ? "1 0 auto" : "none")};
  align-items: center;
  padding: 2px 3px 0 2px;
  border: solid;
  border-width: 1px 1px 1px 0;
  border-color: #fff #808080 #808080 #fff;
`;

const Grip = styled.div`
  flex: none;
  width: ${(p) => (p.$flat ? "20px" : "8px")};
  height: ${(p) => (p.$flat ? "7px" : "24px")};
  margin: ${(p) => (p.$flat ? "0 0 2px" : "0 2px 0 0")};
  background: ${(p) =>
    p.$flat
      ? "linear-gradient(#fff 0 2px, #808080 2px 3px, #d4d0c8 3px 4px, #fff 4px 6px, #808080 6px)"
      : "linear-gradient(to right, #fff 0 2px, #808080 2px 3px, #d4d0c8 3px 5px, #fff 5px 7px, #808080 7px)"};
`;

const ToolButton = styled.button`
  display: flex;
  flex: none;
  align-items: center;
  justify-content: center;
  width: ${(p) => (p.$narrow ? 13 : 23)}px;
  height: 22px;
`;

const Tolerance = styled.span`
  display: grid;
  font: 9px/8px "Liberation Sans", sans-serif;
`;

const Separator = styled.span`
  flex: none;
  width: 2px;
  height: 20px;
  margin: 0 2px;
  border-left: 1px solid #808080;
  border-right: 1px solid #fff;
`;

const ComboBox = styled.div`
  display: flex;
  flex: none;
  align-items: center;
  width: ${(p) => p.$width}px;
  height: 21px;
  margin-right: 1px;
  padding-left: 2px;
  border: 1px solid;
  border-color: #606060 #fff #fff #606060;
  box-shadow: inset 1px 1px 0 #808080;
  background: ${(p) => (p.$disabled ? "#d4d0c8" : "#fff")};
`;

const ComboSelect = styled.select`
  ${mono}
  flex: 1;
  min-width: 0;
  height: 17px;
  padding: 0 1px;
  appearance: none;
  border: none;
  background: transparent;
  color: ${(p) => (p.disabled ? "#808080" : "#000")};
  opacity: 1;
  font-size: ${(p) => (p.$cjk ? 12 : 10)}px;
  line-height: 17px;
`;

const ComboArrow = styled.span`
  ${raised}
  display: flex;
  flex: none;
  align-items: center;
  justify-content: center;
  width: 16px;
  height: 17px;
  margin-right: 1px;
  background: #d4d0c8;
  color: ${(p) => (p.$disabled ? "#808080" : "#000")};
  pointer-events: none;
`;

const LineSample = styled.span`
  flex: none;
  width: ${(p) => p.$width}px;
  margin: 0 4px 0 2px;
  border-top: 1px solid #000;
`;

const Workspace = styled.main`
  display: flex;
  flex: 1;
  align-items: flex-start;
  gap: 1px;
  padding-bottom: 2px;
  border-bottom: 1px solid #fff;
`;

const SideBar = styled.div`
  display: flex;
  flex: none;
  flex-direction: column;
  align-items: center;
  width: 25px;
  margin-top: ${(p) => (p.$low ? 6 : 0)}px;
  padding: 1px 1px 4px 0;
  border: 1px solid;
  border-color: #fff #808080 #808080 #fff;
`;

const Viewport = styled.section`
  display: flex;
  flex: 1;
  flex-direction: column;
  align-self: stretch;
  min-width: 0;
  border: solid;
  border-width: 2px 1px 1px 2px;
  border-color: #606060 #fff #fff #606060;
`;

const CanvasRow = styled.div`
  display: flex;
  flex: 1;
`;

const Canvas = styled.div`
  display: flex;
  flex: 1;
  min-width: 0;
  background: #000;
`;

const DrawingSvg = styled.svg`
  width: 100%;
  min-height: 455px;
  shape-rendering: crispEdges;
`;

const CadText = styled.g`
  font: 300 ${(p) => p.$size}px "Noto Sans CJK SC", sans-serif;
`;

const VScroll = styled.div`
  display: flex;
  flex: none;
  flex-direction: column;
  width: 16px;
`;

const Track = styled.div`
  ${dither}
  flex: ${(p) => (p.$size ? `0 0 ${p.$size}px` : `${p.$grow} 1 0`)};
`;

const ScrollButton = styled.button`
  ${raised}
  display: flex;
  flex: none;
  align-items: center;
  justify-content: center;
  width: 16px;
  height: 15px;
`;

const Thumb = styled.div`
  ${raised}
  flex: none;
  width: 15px;
  height: 15px;
  background: #d4d0c8;
`;

const TabRow = styled.div`
  display: flex;
  height: 15px;
`;

const NavButton = styled.button`
  ${raised}
  display: flex;
  align-items: center;
  justify-content: center;
  width: 18px;
`;

const Tabs = styled.div`
  display: flex;
  flex: 1;
  padding-left: 2px;
`;

const Tab = styled.button`
  position: relative;
  height: 14px;
  padding: 0 6px;
  font-size: 12px;
  line-height: 14px;
  border-bottom: 1px solid #000;
  ${(p) =>
    p.$active &&
    css`
      padding: 0 8px;
      background: #000;
      color: #fff;
      clip-path: polygon(0 0, 100% 0, calc(100% - 5px) 100%, 5px 100%);
    `}

  &::before,
  &::after {
    content: "";
    position: absolute;
    top: 0;
    bottom: 0;
    border-left: 1px solid #000;
  }
  &::before {
    left: 2px;
    transform: skewX(20deg);
  }
  &::after {
    right: 2px;
    transform: skewX(-20deg);
  }
`;

const HScroll = styled.div`
  display: flex;
  width: 35%;
  padding-right: 16px;
`;

const Splitter = styled.div`
  ${raised}
  width: 5px;
`;

const CommandPanel = styled.section`
  display: flex;
  align-items: stretch;
  margin-top: 3px;
  padding: 5px 7px 1px 6px;
  border-top: 2px solid #000;
  border-bottom: 1px solid #808080;

  > ${Grip} {
    height: auto;
    margin-right: 3px;
  }
`;

const CommandBox = styled.div`
  flex: 1;
  border-top: 1px solid #000;
  border-left: 1px solid #000;
  ${mono}
  font-size: 14px;
  line-height: 14px;
`;

const HistoryRow = styled.div`
  display: flex;
  height: 43px;
  border-bottom: 1px solid #808080;
`;

const History = styled.div`
  flex: 1;
  padding-left: 1px;
  overflow: hidden;
  background: #fff;

  p {
    margin: 0;
    white-space: pre;
  }
`;

const PromptRow = styled.div`
  display: flex;
  align-items: center;
  height: 16px;
  padding-left: 1px;
  background: #fff;

  > ${Track} {
    align-self: stretch;
  }
`;

const Prompt = styled.input`
  ${mono}
  flex: 1;
  min-width: 0;
  height: 15px;
  border: none;
  outline: none;
  font-size: 14px;
`;

const Corner = styled.div`
  width: 17px;
  height: 16px;
  background: #d4d0c8;
`;

const StatusBar = styled.footer`
  display: flex;
  align-items: center;
  gap: 4px;
  height: 26px;
  padding: 0 3px 0 5px;
  border-top: 1px solid #fff;
  ${mono}
  font-size: 10px;
`;

const Coordinates = styled.output`
  ${sunken}
  width: 250px;
  height: 19px;
  margin-right: 1px;
  padding-left: 1px;
  line-height: 18px;
`;

const Toggle = styled.button`
  height: 19px;
  padding: 0 1px;
  border: 1px solid;
  border-color: ${(p) => (p.$on ? "#000 #fff #fff #000" : "#fff #808080 #808080 #fff")};
  font-size: ${(p) => (p.$small ? 10 : 12)}px;
  line-height: 17px;
`;

const StatusTray = styled.div`
  ${sunken}
  display: flex;
  align-items: center;
  justify-content: space-around;
  width: 44px;
  height: 19px;
  margin-left: auto;
  margin-right: 6px;
`;

const TaskBar = styled.div`
  display: flex;
  align-items: center;
  height: 28px;
  padding: 0 2px 4px;
  border-top: 1px solid #fff;
`;

const StartButton = styled.button`
  ${raised}
  display: flex;
  align-items: center;
  justify-content: center;
  gap: 2px;
  width: 47px;
  height: 22px;
  font-size: 12px;
`;

const TaskDivider = styled.div`
  flex: none;
  width: 2px;
  height: 20px;
  margin: 0 5px 0 7px;
  border-left: 1px solid #808080;
  border-right: 1px solid #fff;
`;

const QuickLaunch = styled.div`
  display: flex;
  align-items: center;
  gap: 6px;
  width: 84px;
  padding-left: 3px;
`;

const More = styled.span`
  font: bold 14px "Liberation Sans", sans-serif;
`;

const TaskList = styled.div`
  display: flex;
  flex: 1;
  gap: 3px;
  min-width: 0;
`;

const Task = styled.button`
  ${raised}
  display: flex;
  flex: 1 1 0;
  align-items: center;
  gap: 4px;
  min-width: 0;
  height: 22px;
  padding: 0 3px;
  white-space: nowrap;
  ${(p) =>
    p.$active &&
    css`
      ${dither}
      border-color: #404040 #fff #fff #404040;
      box-shadow: inset 1px 1px 0 #808080;
    `}

  span {
    overflow: hidden;
  }
`;

const Tray = styled.div`
  ${sunken}
  display: flex;
  align-items: center;
  gap: 3px;
  width: 114px;
  height: 22px;
  padding-left: 3px;

  time {
    margin-left: 4px;
  }
`;
